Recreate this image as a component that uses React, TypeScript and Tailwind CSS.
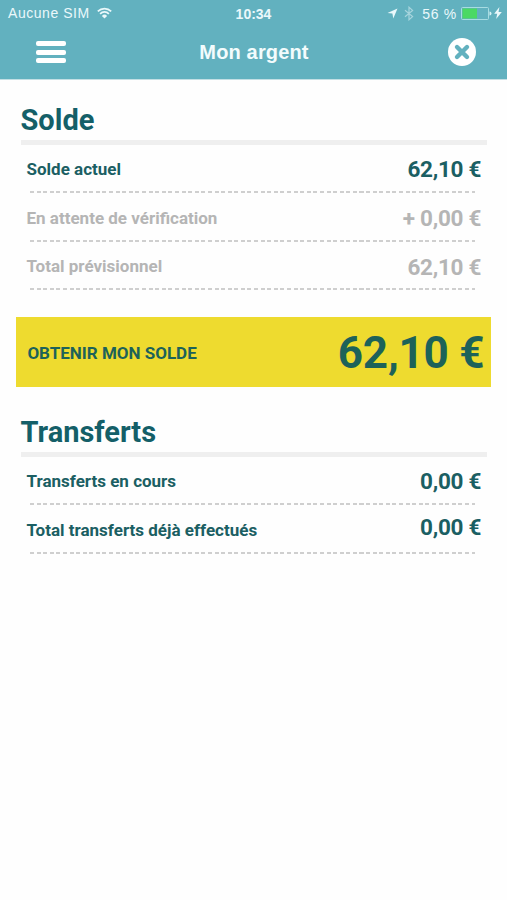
type RowProps = {
  label: string;
  amount: string;
  muted?: boolean;
  raised?: boolean;
};

function StatusBar() {
  return (
    <div className="grid h-[26px] grid-cols-[1fr_auto_1fr] items-center pr-[5px] pl-2 text-[14px] leading-none text-[#eaf8fb]">
      <div className="flex items-center gap-[7px]">
        <span className="w-[82px] whitespace-nowrap tracking-[0.55px]">Aucune SIM</span>
        <svg width="15" height="12" viewBox="0 0 15 12" className="-mt-px" fill="none" stroke="currentColor" strokeWidth="1.7">
          <path d="M0.8 4.3a9.5 9.5 0 0 1 13.4 0" />
          <path d="M3.1 6.8a6.2 6.2 0 0 1 8.8 0" />
          <path d="M7.5 11.6L4.9 8.9a3.7 3.7 0 0 1 5.2 0z" fill="currentColor" stroke="none" />
        </svg>
      </div>

      <span className="mr-[3px] pt-px text-[14px] font-bold">10:34</span>

      <div className="flex items-center justify-end">
        <svg width="11" height="11" viewBox="0 0 11 11" fill="currentColor">
          <path d="M10.5 0.5L6.3 10.5L5.4 5.6L0.5 4.9z" />
        </svg>
        <svg width="10" height="15" viewBox="0 0 10 15" className="mr-[8px] ml-[6px] opacity-50" fill="none" stroke="currentColor" strokeWidth="1.2">
          <path d="M1 4.2L8.6 10.6L5 13.8V1.2L8.6 4.4L1 10.8" />
        </svg>
        <span className="pt-px tracking-[0.7px] whitespace-nowrap">56 %</span>
        <svg width="31" height="13" viewBox="0 0 31 13" className="ml-[4px]">
          <rect x="0.5" y="0.5" width="27" height="12" rx="1" fill="none" stroke="#a8dce2" />
          <rect x="1.5" y="1.5" width="14.5" height="10" fill="#4bd964" />
          <path d="M28.5 4.5a2 2 0 0 1 0 4z" fill="#d8f3f6" />
        </svg>
        <svg width="8" height="12" viewBox="0 0 7 11" className="ml-[2px]" fill="currentColor">
          <path d="M4.8 0L0 6.2h2.8L1.8 11L7 4.5H4z" />
        </svg>
      </div>
    </div>
  );
}

function NavBar() {
  return (
    <div className="grid h-[52px] grid-cols-[1fr_auto_1fr] items-center pr-[31px] pl-[36px]">
      <button aria-label="Menu" className="flex w-[30px] flex-col gap-[3.5px]">
        <span className="h-[5px] w-full rounded-[2px] bg-white" />
        <span className="h-[5px] w-full rounded-[2px] bg-white" />
        <span className="h-[5px] w-full rounded-[2px] bg-white" />
      </button>
      <h1 className="mr-[4px] text-[20px] leading-none font-bold tracking-[0.15px] text-[#f3fcfd]">Mon argent</h1>
      <button aria-label="Fermer" className="justify-self-end">
        <svg width="28" height="28" viewBox="0 0 28 28">
          <circle cx="14" cy="14" r="14" fill="#fff" />
          <path d="M9 9l10 10M19 9L9 19" stroke="#62b1bf" strokeWidth="4.4" strokeLinecap="round" />
        </svg>
      </button>
    </div>
  );
}

function DashedLine() {
  return (
    <div className="mr-[12px] ml-[9px] h-[2px] bg-[repeating-linear-gradient(to_right,#cfcfcf_0_4px,transparent_4px_6.59px)]" />
  );
}

function Row({ label, amount, muted, raised }: RowProps) {
  return (
    <div className={muted ? "text-[#b5b5b5]" : "text-[#1b5f63]"}>
      <div className="flex h-[46.8px] items-center justify-between pt-[4px] pr-[6px] pl-[6px]">
        <span className="text-[17px] leading-none font-bold">{label}</span>
        <span
          className={
            raised
              ? "pb-[5px] text-[22.5px] leading-none font-bold tracking-[-0.3px]"
              : "text-[22.5px] leading-none font-bold tracking-[-0.3px]"
          }
        >
          {amount}
        </span>
      </div>
      <DashedLine />
    </div>
  );
}

function SectionTitle({ children }: { children: string }) {
  return (
    <h2 className="-mb-px h-[44px] border-b-[5px] border-[#efefef] text-[29px] leading-[39px] font-bold text-[#145f68]">
      {children}
    </h2>
  );
}

export default function App() {
  return (
    <div className="min-h-[900px] w-full bg-[#fefefe] font-['Roboto',sans-serif]">
      <header className="h-[80px] border-b border-[#c3dfe4] bg-[#62b1bf] font-['Liberation_Sans',sans-serif]">
        <StatusBar />
        <NavBar />
      </header>

      <main>
        <section className="mt-[21px] mr-[20px] ml-[20.5px]">
          <SectionTitle>Solde</SectionTitle>
          <Row label="Solde actuel" amount="62,10 €" />
          <Row label="En attente de vérification" amount="+ 0,00 €" muted />
          <Row label="Total prévisionnel" amount="62,10 €" muted />
        </section>

        <button className="mt-[26.6px] ml-[16.4px] flex h-[70px] w-[475px] items-center justify-between bg-[#eedb2f] pt-[3px] pr-[7px] pl-[11px] text-[#1d6259]">
          <span className="text-[17px] leading-none font-bold">OBTENIR MON SOLDE</span>
          <span className="text-[44px] leading-none font-bold tracking-[-0.2px]">62,10 €</span>
        </button>

        <section className="mt-[26px] mr-[20px] ml-[20.5px]">
          <SectionTitle>Transferts</SectionTitle>
          <Row label="Transferts en cours" amount="0,00 €" />
          <Row label="Total transferts déjà effectués" amount="0,00 €" raised />
        </section>
      </main>
    </div>
  );
}
